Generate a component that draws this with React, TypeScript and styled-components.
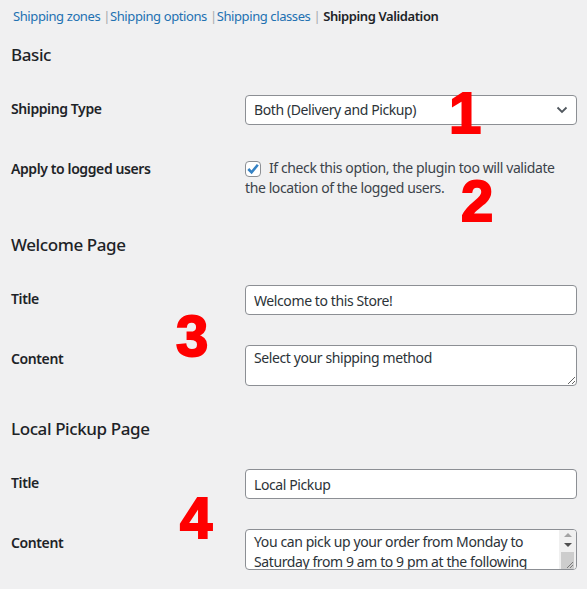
import styled, { createGlobalStyle } from "styled-components";

const GlobalStyle = createGlobalStyle`
  html, body {
    margin: 0;
    padding: 0;
    background: #f0f0f1;
  }
  body {
    font-family: "Noto Sans", "Open Sans", sans-serif;
    font-size: 14px;
    letter-spacing: -0.4px;
    color: #3c434a;
  }
`;

// Styled components
const Page = styled.div`
  position: relative;
  width: 587px;
  height: 589px;
  overflow: hidden;
  padding: 0 10px 0 11px;
  box-sizing: border-box;
`;

const SubNav = styled.ul`
  list-style: none;
  margin: 0;
  padding: 6px 0 0 2px;
  display: flex;
  font-size: 13px;
  line-height: 20px;
  color: #a7aaad;
`;

const NavItem = styled.li`
  white-space: pre;
`;

const NavLink = styled.a<{ $current?: boolean }>`
  color: ${(p) => (p.$current ? "#1d2327" : "#2271b1")};
  font-weight: ${(p) => (p.$current ? 600 : 400)};
  text-decoration: none;
`;

const Heading = styled.h2<{ $top: number }>`
  margin: ${(p) => p.$top}px 0 13px;
  font-size: 17px;
  line-height: 24px;
  font-weight: 500;
  color: #1d2327;
`;

const FormTable = styled.div`
  display: flex;
  flex-direction: column;
`;

const Row = styled.div`
  display: grid;
  grid-template-columns: 234px 1fr;
`;

const Label = styled.div`
  padding: 20px 0;
  line-height: 18px;
  font-weight: 600;
  color: #1d2327;
`;

const Field = styled.div<{ $padTop?: number }>`
  padding: ${(p) => p.$padTop ?? 15}px 0 15px;
`;

const SelectBox = styled.div`
  height: 30px;
  box-sizing: border-box;
  border: 1px solid #8c8f94;
  border-radius: 4px;
  background: #fff;
  display: flex;
  align-items: center;
  justify-content: space-between;
  padding: 0 8px 0 8px;
  color: #2c3338;
  line-height: 20px;
`;

const TextInput = styled.input`
  display: block;
  width: 100%;
  height: 30px;
  box-sizing: border-box;
  border: 1px solid #8c8f94;
  border-radius: 4px;
  background: #fff;
  padding: 0 8px;
  font: inherit;
  letter-spacing: inherit;
  color: #2c3338;
  outline: none;
`;

const AreaWrap = styled.div`
  position: relative;
`;

const TextArea = styled.textarea<{ $scroll?: boolean }>`
  display: block;
  width: 100%;
  height: 41px;
  box-sizing: border-box;
  border: 1px solid #8c8f94;
  border-radius: 4px;
  background: #fff;
  padding: 2px ${(p) => (p.$scroll ? 26 : 8)}px 2px 8px;
  font: inherit;
  letter-spacing: inherit;
  line-height: 20px;
  color: #2c3338;
  resize: vertical;
  outline: none;
  overflow: hidden;
`;

// fake classic scrollbar drawn over the right edge of the textarea
const ScrollBar = styled.div`
  position: absolute;
  top: 1px;
  right: 1px;
  bottom: 1px;
  width: 17px;
  display: flex;
  flex-direction: column;
  background: #f0f0f0;
  border-radius: 0 3px 3px 0;
  overflow: hidden;
`;

const ScrollArrow = styled.div<{ $dir: "up" | "down"; $dim?: boolean }>`
  height: 10px;
  display: flex;
  align-items: center;
  justify-content: center;

  &::before {
    content: "";
    border-left: 4px solid transparent;
    border-right: 4px solid transparent;
    ${(p) =>
      p.$dir === "up"
        ? `border-bottom: 4px solid ${p.$dim ? "#a3a3a3" : "#505050"};`
        : `border-top: 4px solid ${p.$dim ? "#a3a3a3" : "#505050"};`}
  }
`;

const ScrollThumb = styled.div`
  flex: 1;
  margin: 2px 2px 0;
  background: #cdcdcd;
  display: flex;
  align-items: flex-end;
  justify-content: flex-end;
`;

const CheckLabel = styled.label`
  display: block;
  line-height: 20px;
  color: #3c434a;
`;

const CheckBox = styled.span`
  display: inline-flex;
  align-items: center;
  justify-content: center;
  width: 16px;
  height: 16px;
  box-sizing: border-box;
  border: 1px solid #8c8f94;
  border-radius: 4px;
  background: #fff;
  vertical-align: -3px;
  margin-right: 8px;
`;

const Marker = styled.span<{ $x: number; $y: number }>`
  position: absolute;
  left: ${(p) => p.$x}px;
  top: ${(p) => p.$y}px;
  font-family: "Liberation Sans", Arial, sans-serif;
  font-weight: 900;
  font-size: 58px;
  line-height: 42px;
  letter-spacing: 0;
  color: #ff0000;
  -webkit-text-stroke: 2px #ff0000;
`;

const navItems = ["Shipping zones", "Shipping options", "Shipping classes"];

export default function App() {
  return (
    <Page>
      <GlobalStyle />
      <SubNav>
        {navItems.map((item) => (
          <NavItem key={item}>
            <NavLink href="#">{item}</NavLink>
            {" |"}
          </NavItem>
        ))}
        <NavItem>
          {" "}
          <NavLink $current>Shipping Validation</NavLink>
        </NavItem>
      </SubNav>

      <Heading $top={17}>Basic</Heading>
      <FormTable>
        <Row>
          <Label>Shipping Type</Label>
          <Field>
            <SelectBox>
              <span>Both (Delivery and Pickup)</span>
              <svg width="12" height="8" viewBox="0 0 12 8">
                <path d="M1.5 1.5 L6 6 L10.5 1.5" fill="none" stroke="#50575e" strokeWidth="1.8" />
              </svg>
            </SelectBox>
          </Field>
        </Row>
        <Row>
          <Label>Apply to logged users</Label>
          <Field $padTop={18}>
            <CheckLabel>
              <CheckBox>
                <svg width="14" height="14" viewBox="0 0 14 14">
                  <path d="M2.3 7 L5.6 10.4 L11.8 2.8" fill="none" stroke="#3582c4" strokeWidth="2.6" />
                </svg>
              </CheckBox>
              If check this option, the plugin too will validate the location of the logged users.
            </CheckLabel>
          </Field>
        </Row>
      </FormTable>

      <Heading $top={20}>Welcome Page</Heading>
      <FormTable>
        <Row>
          <Label>Title</Label>
          <Field>
            <TextInput defaultValue="Welcome to this Store!" />
          </Field>
        </Row>
        <Row>
          <Label>Content</Label>
          <Field>
            <TextArea defaultValue="Select your shipping method" />
          </Field>
        </Row>
      </FormTable>

      <Heading $top={16}>Local Pickup Page</Heading>
      <FormTable>
        <Row>
          <Label>Title</Label>
          <Field>
            <TextInput defaultValue="Local Pickup" />
          </Field>
        </Row>
        <Row>
          <Label>Content</Label>
          <Field>
            <AreaWrap>
              <TextArea
                $scroll
                defaultValue="You can pick up your order from Monday to Saturday from 9 am to 9 pm at the following address: Main Street 123, Downtown."
              />
              <ScrollBar>
                <ScrollArrow $dir="up" $dim />
                <ScrollArrow $dir="down" />
                <ScrollThumb>
                  <svg width="9" height="9" viewBox="0 0 9 9">
                    <path d="M8 2 L2 8 M8 5 L5 8" stroke="#7a7a7a" strokeWidth="1" />
                  </svg>
                </ScrollThumb>
              </ScrollBar>
            </AreaWrap>
          </Field>
        </Row>
      </FormTable>

      <Marker $x={449} $y={92}>1</Marker>
      <Marker $x={461} $y={180}>2</Marker>
      <Marker $x={176} $y={315}>3</Marker>
      <Marker $x={180} $y={497}>4</Marker>
    </Page>
  );
}
